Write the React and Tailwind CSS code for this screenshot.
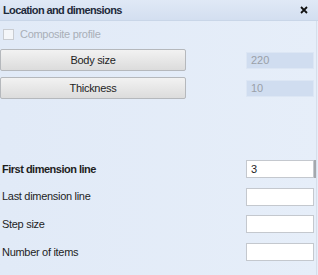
import React from 'react';

const font = { fontFamily: '"Liberation Sans", Arial, sans-serif' };

const Row = ({ label, value, bold }) => (
    <div className="flex items-center justify-between h-[27.7px]">
        <span className={`pl-[2px] text-[11px] text-[#1e1e1e] ${bold ? 'font-bold tracking-[-0.5px]' : 'tracking-[-0.3px]'}`}>{label}</span>
        <div className="flex items-center">
            <div className="w-[68px] h-[18px] bg-white border border-[#c4c8ce] flex items-center px-[4px] text-[11px] text-[#1e1e1e]">
                {value}
            </div>
            <div className={`w-[2px] h-[18px] ${bold ? 'bg-[#a4a8ad]' : ''}`} />
        </div>
    </div>
);

const SizeRow = ({ label, value }) => (
    <div className="flex items-center justify-between">
        <button className="w-[186px] h-[22px] rounded-[2px] border border-[#b5b8bc] bg-gradient-to-b from-[#f2f2f2] to-[#dcdcdc] text-[11px] tracking-[-0.3px] text-[#1e1e1e]">
            {label}
        </button>
        <div className="w-[68px] h-[17px] mr-[2px] bg-[#d0ddf0] border border-[#dce6f4] flex items-center px-[4px] text-[11px] text-[#9aa0a8]">
            {value}
        </div>
    </div>
);

export default function App() {
    return (
        <div className="w-[318px] h-[275px] overflow-hidden bg-gradient-to-r from-[#e1eaf7] to-[#e6eef9] flex flex-col" style={font}>
            {/* Title bar */}
            <div className="h-[21px] shrink-0 flex items-center justify-between pl-[3px] pr-[10px] bg-gradient-to-b from-[#e0e9f6] to-[#d3dff0] border-b border-[#c9d6e8]">
                <span className="text-[11px] font-bold tracking-[-0.6px] text-[#1e2a3a]">Location and dimensions</span>
                <svg width="8" height="8" viewBox="0 0 8 8">
                    <path d="M1 1L7 7M7 1L1 7" stroke="#111" strokeWidth="1.8" />
                </svg>
            </div>

            <div className="flex flex-col border-r border-[#d6dfeb] mr-[1px] flex-1">
                {/* Composite profile */}
                <div className="flex items-center gap-[6px] pl-[3px] h-[27px]">
                    <div className="w-[11px] h-[11px] border border-[#c9ccd1] bg-[#f4f6f9]" />
                    <span className="text-[11px] tracking-[-0.3px] text-[#a9afb7]">Composite profile</span>
                </div>

                <div className="flex flex-col gap-[6px] mt-[1px]">
                    <SizeRow label="Body size" value="220" />
                    <SizeRow label="Thickness" value="10" />
                </div>

                <div className="flex flex-col mt-[56px]">
                    <Row label="First dimension line" value="3" bold />
                    <Row label="Last dimension line" />
                    <Row label="Step size" />
                    <Row label="Number of items" />
                </div>
            </div>
        </div>
    );
}
